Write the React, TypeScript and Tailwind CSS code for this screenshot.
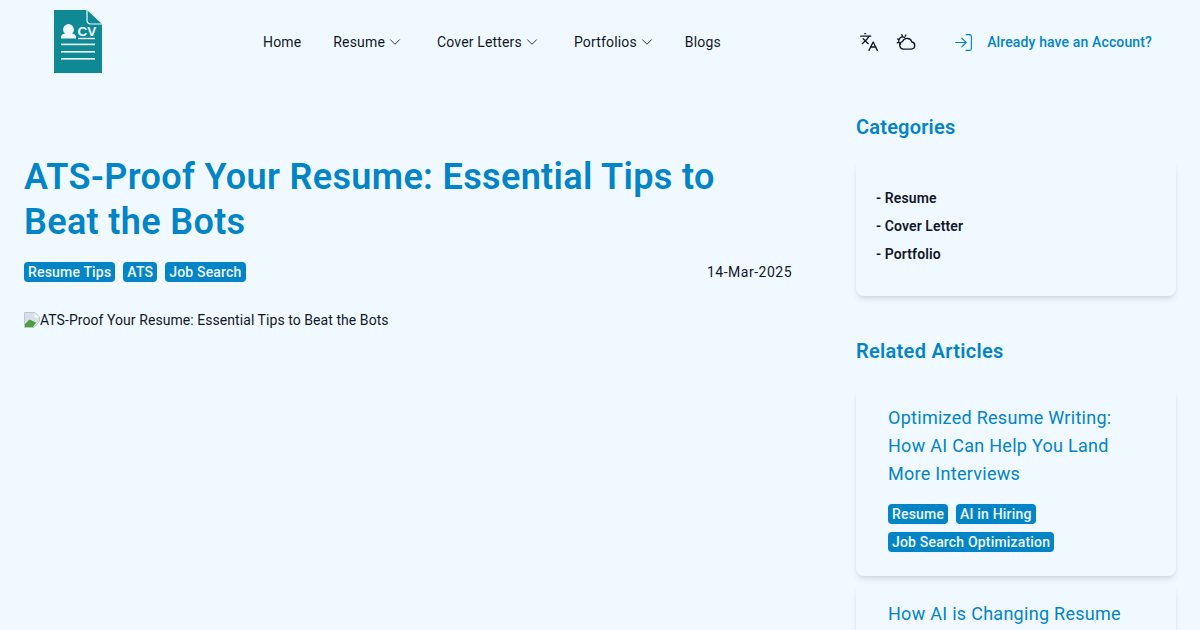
import { ChevronDown, Languages, LogIn } from 'lucide-react';

const font = { fontFamily: '"Roboto", "Liberation Sans", sans-serif' };

function Logo() {
  return (
    <svg width="48" height="64" viewBox="0 0 48 64" className="block">
      <path d="M0 0H33L48 14V63H0Z" fill="#0f8a94" />
      <path d="M33 0V10Q33 14 37 14H48" fill="none" stroke="#f0f9ff" strokeWidth="1.2" />
      <circle cx="14.5" cy="19.5" r="5.4" fill="#f0f9ff" />
      <path d="M7 28.5V27Q7 24 11 23.5H18Q22 24 22 27V28.5Z" fill="#f0f9ff" />
      <text x="23.5" y="26" fontSize="13.5" fontWeight="700" fill="#f0f9ff" fontFamily="Liberation Sans, sans-serif">CV</text>
      <rect x="24" y="27.8" width="17" height="1.4" fill="#f0f9ff" />
      <rect x="7" y="33.6" width="34" height="1.6" fill="#f0f9ff" />
      <rect x="7" y="41" width="34" height="1.6" fill="#f0f9ff" />
      <rect x="7" y="48" width="34" height="1.6" fill="#f0f9ff" />
    </svg>
  );
}

function CloudIcon() {
  return (
    <svg width="20" height="20" viewBox="0 0 24 24" fill="none" stroke="#111827" strokeWidth="1.6" strokeLinecap="round" strokeLinejoin="round" className="ml-[17px]">
      <path d="M9.5 20.5h9a4.3 4.3 0 0 0 .6-8.5 6 6 0 0 0-11.3-.5 4.6 4.6 0 0 0 1.7 9z" />
      <path d="M5.6 14.5A4.6 4.6 0 0 1 10.5 6.6" />
      <path d="M7 3.2 7.8 5M1.9 8.3l1.8.8M1.5 13l1.9-.5M11.8 3.6l-.7 1.3" />
    </svg>
  );
}

function BrokenImage() {
  return (
    <svg width="16" height="16" viewBox="0 0 16 16" className="inline-block align-[-3px]">
      <path d="M0.5 0.5H11L15.5 5V9.5L10 15.5H0.5Z" fill="#d5dfee" stroke="#c2c6cc" />
      <path d="M1 15V12L5.5 7.5L12 10.5L9 15Z" fill="#4f9e3f" />
      <path d="M10.5 1V5.5H15" fill="#fff" />
    </svg>
  );
}

function Tag({ children }: { children: React.ReactNode }) {
  return (
    <span className="inline-flex h-5 items-center rounded bg-[#0284c7] px-1 text-sm font-medium tracking-[0.18px] text-sky-50">
      {children}
    </span>
  );
}

function NavItem({ label, menu }: { label: string; menu?: boolean }) {
  return (
    <span className="flex items-center text-sm tracking-[0.16px] text-gray-900">
      {label}
      {menu && <ChevronDown size={18} strokeWidth={1.2} className="mx-px text-gray-800" />}
    </span>
  );
}

export default function App() {
  return (
    <div style={font} className="h-[630px] overflow-hidden bg-[#f0f9ff] text-gray-900">
      <header className="flex h-[84px] items-center">
        <div className="ml-[54px] w-12">
          <Logo />
        </div>
        <nav className="ml-[161px] flex items-center gap-8">
          <NavItem label="Home" />
          <NavItem label="Resume" menu />
          <NavItem label="Cover Letters" menu />
          <NavItem label="Portfolios" menu />
          <div className="-ml-1">
            <NavItem label="Blogs" />
          </div>
        </nav>
        <div className="ml-auto flex items-center pr-12">
          <Languages size={20} strokeWidth={1.6} className="text-gray-900" />
          <CloudIcon />
          <LogIn size={21} strokeWidth={1.3} className="ml-[37px] text-[#0284c7]" />
          <span className="ml-[13px] text-sm font-medium tracking-[0.13px] text-[#0284c7]">Already have an Account?</span>
        </div>
      </header>
      <main className="flex items-start px-6">
        <article className="w-[768px] pt-[71px]">
          <h1 className="text-4xl leading-[45px] font-semibold tracking-[0.35px] text-[#0284c7]">
            ATS-Proof Your Resume: Essential Tips to Beat the Bots
          </h1>
          <div className="mt-[17px] flex items-center">
            <div className="flex gap-2">
              <Tag>Resume Tips</Tag>
              <Tag>ATS</Tag>
              <Tag>Job Search</Tag>
            </div>
            <span className="ml-auto text-sm tracking-[0.5px]">14-Mar-2025</span>
          </div>
          <p className="mt-7 text-sm leading-5 tracking-[0.06px]">
            <BrokenImage />
            ATS-Proof Your Resume: Essential Tips to Beat the Bots
          </p>
        </article>
        <aside className="ml-16 w-80">
          <h2 className="pt-7 text-xl leading-[30px] font-semibold tracking-[0.2px] text-[#0284c7]">Categories</h2>
          <div className="mt-[18px] rounded-lg px-5 pt-6 pb-7 shadow-md">
            <ul className="text-sm leading-7 font-semibold tracking-[0.1px]">
              <li>- Resume</li>
              <li>- Cover Letter</li>
              <li>- Portfolio</li>
            </ul>
          </div>
          <h2 className="mt-10 text-xl leading-[30px] font-semibold tracking-[0.3px] text-[#0284c7]">Related Articles</h2>
          <div className="mt-[22px] rounded-lg px-8 pt-4 pb-6 shadow-md">
            <h3 className="text-lg leading-7 tracking-[0.28px] text-[#0284c7]">
              Optimized Resume Writing: How AI Can Help You Land More Interviews
            </h3>
            <div className="mt-4 flex flex-wrap gap-2">
              <Tag>Resume</Tag>
              <Tag>AI in Hiring</Tag>
              <Tag>Job Search Optimization</Tag>
            </div>
          </div>
          <div className="mt-2 rounded-lg px-8 pt-4 pb-6 shadow-md">
            <h3 className="text-lg leading-7 tracking-[0.28px] text-[#0284c7]">How AI is Changing Resume</h3>
          </div>
        </aside>
      </main>
    </div>
  );
}
